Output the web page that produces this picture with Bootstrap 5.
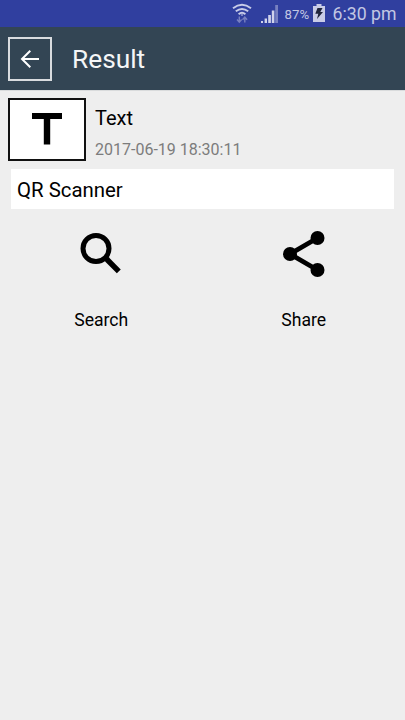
<!DOCTYPE html>
<html lang="en">
<head>
<meta charset="utf-8">
<meta name="viewport" content="width=device-width, initial-scale=1">
<title>Result</title>
<link href="https://cdn.jsdelivr.net/npm/bootstrap@5.3.0/dist/css/bootstrap.min.css" rel="stylesheet">
<style>
  body { font-family: Roboto, sans-serif; background: #eee; color: #000; min-height: 100vh; overflow: hidden; line-height: 1; }
  svg { display: block; flex: none; }
  .status-bar { height: 27px; background: #303f9f; color: #c3c7e3; padding-right: 8.5px; }
  .battery-level { font-size: 13.2px; margin: 2px 4px 0 6px; }
  .battery { margin-top: -2px; }
  .clock { font-size: 17.7px; margin: 2px 0 0 7.5px; }
  .app-bar { height: 63px; background: #334554; color: #f5f6f7; padding-left: 8px; box-shadow: 0 1px 0 #d9dbdc; }
  .back-btn { width: 44px; height: 44px; border: 2px solid #d9dcdf; }
  .app-title { font-size: 26.3px; margin-left: 20px; padding-top: 1px; }
  .result-head { padding: 8px 8px 0; gap: 9px; }
  .type-box { width: 78px; height: 63px; border: 2px solid #111; padding-top: 12px; }
  .type-name { font-size: 20px; padding-top: 10px; }
  .type-date { font-size: 16px; color: #7c7c7c; margin-top: 14px; }
  .result-text { margin: 8px 11px 0; height: 40px; padding: 3px 6px 0; font-size: 20.4px; }
  .actions { padding-top: 20px; }
  .action-label { font-size: 17.6px; margin-top: 33px; }
</style>
</head>
<body>
<div class="status-bar d-flex align-items-center justify-content-end">
  <svg width="20" height="24" viewBox="0 0 20 24" fill="none" stroke="#c8cce8" stroke-width="1.9">
    <path d="M1 6.300Q10-.7 19 6.300M3.800 9.300Q10 4.500 16.200 9.300M6.600 12.200Q10 9.400 13.400 12.200"/>
    <path d="M8.500 12.400h3L10 14z" fill="#c8cce8" stroke="none"/>
    <path d="M7.300 14.500v5M5 17.500l2.300 2.700 2.300-2.700M12.800 20.500v-5M10.500 17.800l2.300-2.700 2.300 2.700" stroke="#777fc0" stroke-width="1.400"/>
  </svg>
  <svg width="19" height="20" viewBox="0 0 19 20" class="ms-2">
    <path d="M1 17h2v2H1zM4.600 14.500H7V19H4.600zM8.200 11h2.700v8H8.200zM11.800 6.500h2.600V19h-2.600z" fill="#d0d3eb"/>
    <path d="M15.200 1H18v18h-2.800z" fill="#7881c1"/>
  </svg>
  <span class="battery-level">87%</span>
  <svg width="12" height="18" viewBox="0 0 12 18" class="battery">
    <path d="M3.500 0h5v2H12v16H0V2h3.500z" fill="#c9cce7"/>
    <path d="M4.500 4h5L7.300 8H10l-6 7 1.300-5.200H2.300z" fill="#20253c"/>
  </svg>
  <span class="clock">6:30 pm</span>
</div>
<header class="app-bar d-flex align-items-center">
  <button type="button" class="back-btn btn p-0 rounded-0 d-flex align-items-center justify-content-center" aria-label="Back">
    <svg width="20" height="20" viewBox="0 0 20 20" fill="none" stroke="#fff" stroke-width="2"><path d="M19 10H2.200M10.300 1.800L2 10l8.300 8.200"/></svg>
  </button>
  <span class="app-title">Result</span>
</header>
<main>
  <div class="result-head d-flex">
    <div class="type-box bg-white d-flex justify-content-center align-items-start">
      <svg width="32" height="34" viewBox="0 0 32 34"><path d="M1 1h30v6H19.200v25.500h-6.400V7H1z"/></svg>
    </div>
    <div>
      <div class="type-name">Text</div>
      <div class="type-date">2017-06-19 18:30:11</div>
    </div>
  </div>
  <div class="result-text bg-white d-flex align-items-center">QR Scanner</div>
  <div class="actions row g-0 text-center">
    <div class="col-6 d-flex flex-column align-items-center">
      <svg width="44" height="50" viewBox="0 0 44 50" fill="none" stroke="#000"><circle cx="17" cy="19.500" r="13" stroke-width="5"/><path d="M26 28.500l3 2.500" stroke-width="5"/><path d="M28 30.500L39.800 42.400" stroke-width="5.500"/></svg>
      <div class="action-label">Search</div>
    </div>
    <div class="col-6 d-flex flex-column align-items-center">
      <svg width="44" height="50" viewBox="0 0 44 50"><path d="M35.500 9L8 25l27.500 16" fill="none" stroke="#000" stroke-width="4.800"/><circle cx="35.500" cy="9" r="7"/><circle cx="8" cy="25" r="7"/><circle cx="35.500" cy="41" r="7"/></svg>
      <div class="action-label">Share</div>
    </div>
  </div>
</main>
<script src="https://cdn.jsdelivr.net/npm/bootstrap@5.3.0/dist/js/bootstrap.bundle.min.js"></script>
</body>
</html>
